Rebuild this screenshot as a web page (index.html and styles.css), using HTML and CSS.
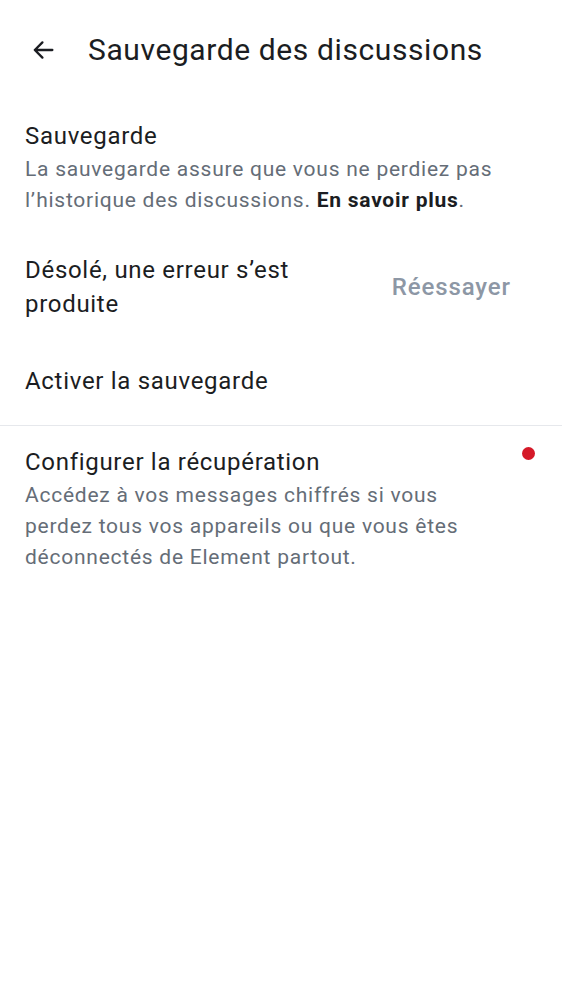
FILE: index.html
```html
<!DOCTYPE html>
<html lang="fr">
<head>
<meta charset="utf-8">
<link rel="stylesheet" href="styles.css">
</head>
<body>
<div class="screen">
  <header class="topbar">
    <svg class="back" width="28" height="28" viewBox="0 0 24 24"><path d="M20 12H5M11.5 5.5L5 12l6.5 6.5" fill="none" stroke="#1b1d22" stroke-width="2" stroke-linecap="round" stroke-linejoin="round"/></svg>
    <h1 class="title">Sauvegarde des discussions</h1>
  </header>

  <section class="item first">
    <div class="item-title">Sauvegarde</div>
    <div class="item-sub">La sauvegarde assure que vous ne perdiez pas l’historique des discussions. <b>En savoir plus</b>.</div>
  </section>

  <section class="row error">
    <div class="row-text">Désolé, une erreur s’est produite</div>
    <div class="retry">Réessayer</div>
  </section>

  <section class="item activate">
    <div class="item-title">Activer la sauvegarde</div>
  </section>

  <div class="divider"></div>

  <section class="item recovery">
    <div class="item-head">
      <div class="item-title">Configurer la récupération</div>
      <span class="dot"></span>
    </div>
    <div class="item-sub">Accédez à vos messages chiffrés si vous perdez tous vos appareils ou que vous êtes déconnectés de Element partout.</div>
  </section>
</div>
</body>
</html>
```

FILE: styles.css
```css
html, body {
  margin: 0;
  padding: 0;
  background: #ffffff;
}
.screen {
  font-family: Roboto, "Noto Sans", sans-serif;
  color: #1b1d22;
  width: 562px;
}
.topbar {
  height: 98px;
  display: flex;
  align-items: center;
  padding-left: 29px;
  box-sizing: border-box;
}
.back {
  display: block;
  margin-top: 1px;
}
.title {
  margin: 2px 0 0 31px;
  font-size: 30px;
  letter-spacing: 0.6px;
  font-weight: 400;
  line-height: 36px;
  color: #1b1d22;
}
.item {
  padding: 0 25px;
}
.item.first {
  padding-top: 22px;
}
.item-title {
  font-size: 24px;
  letter-spacing: 0.7px;
  line-height: 32px;
  color: #1b1d22;
}
.item-sub {
  font-size: 21px;
  letter-spacing: 0.75px;
  line-height: 31px;
  color: #656d77;
  margin-top: 2px;
}
.item-sub b {
  font-weight: 700;
  color: #1b1d22;
}
.row {
  display: flex;
  align-items: center;
  padding: 0 51px 0 25px;
}
.row.error {
  margin-top: 37px;
}
.row-text {
  font-size: 24px;
  letter-spacing: 0.7px;
  line-height: 34px;
  width: 300px;
}
.retry {
  margin-left: auto;
  font-size: 24px;
  letter-spacing: 0.9px;
  font-weight: 500;
  color: #8d97a5;
  line-height: 34px;
}
.item.activate {
  margin-top: 44px;
}
.divider {
  height: 1px;
  background: #e6e8ec;
  margin-top: 28px;
}
.item.recovery {
  padding-top: 20px;
}
.item-head {
  display: flex;
  align-items: flex-start;
}
.dot {
  width: 13px;
  height: 13px;
  border-radius: 50%;
  background: #d51928;
  margin-left: auto;
  margin-right: 2px;
  margin-top: 1px;
}
.recovery .item-sub {
  width: 470px;
}
```
